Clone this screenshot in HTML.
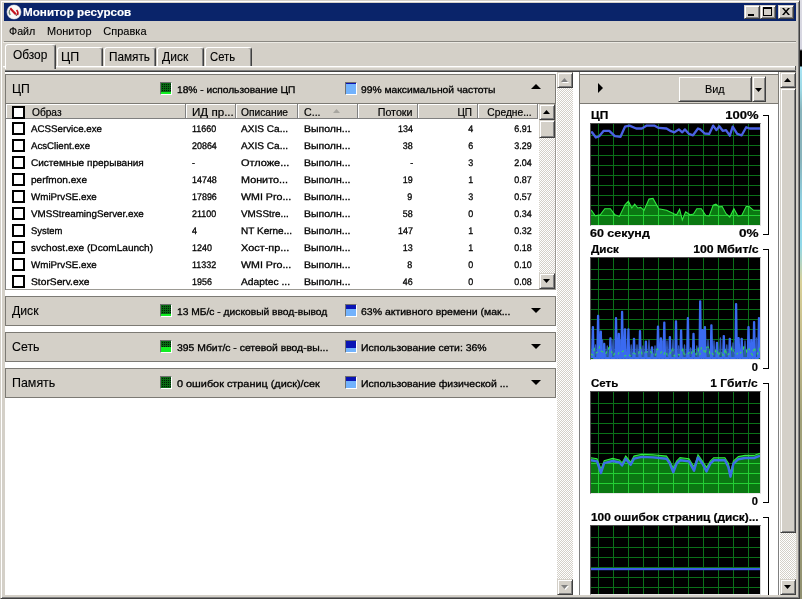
<!DOCTYPE html>
<html><head><meta charset="utf-8"><title>Монитор ресурсов</title>
<style>
html,body{margin:0;padding:0}
body{width:802px;height:599px;overflow:hidden;background:#d4d0c8;position:relative;font-family:"Liberation Sans",sans-serif;font-size:11px;color:#000}
div,span,svg{position:absolute;box-sizing:border-box}
.t{white-space:nowrap;line-height:16px;height:16px;transform-origin:0 0}
.tr{transform-origin:100% 0}
.b{font-weight:bold}
.btn{background:#d4d0c8;border:1px solid;border-color:#d4d0c8 #404040 #404040 #d4d0c8;box-shadow:inset 1px 1px 0 #fff,inset -1px -1px 0 #808080}
.dith{background-image:conic-gradient(#fff 25%,#d4d0c8 0 50%,#fff 0 75%,#d4d0c8 0);background-size:2px 2px}
.sec{left:5px;width:551px;height:30px;background:#d4d0c8;border:1px solid #7c7a74}
.cb{width:13px;height:13px;border:2px solid #000;background:#fff;left:12px}
.hd{top:104px;height:15px;background:#d4d0c8;border-right:1px solid #808080;border-bottom:1px solid #808080;box-shadow:inset 1px 1px 0 #fff}
</style></head><body><div id="w" style="left:0;top:0;width:802px;height:599px;will-change:transform">

<div style="left:800px;top:0;width:2px;height:599px;background:linear-gradient(#dcdce4 0,#d4d4e0 49px,#000 51px,#000 66px,#a8e4f4 67px,#9cd8e4 90px,#88b4bc 110px,#88b4bc 160px,#90d0e0 200px,#90d8e8 245px,#d8d098 282px,#c0b888 350px,#a0a078 420px,#a0a078 480px,#909070 599px)"></div>
<div style="left:0;top:0;width:800px;height:599px;border:1px solid;border-color:#d4d0c8 #404040 #404040 #d4d0c8;box-shadow:inset 1px 1px 0 #fff,inset -1px -1px 0 #808080"></div>
<div style="left:4px;top:3px;width:792px;height:18px;background:#0a246a"></div>
<svg style="left:6px;top:4px" width="16" height="16" viewBox="0 0 16 16"><circle cx="8" cy="8" r="7.5" fill="#f4f2ee" opacity="0.55"/><circle cx="8" cy="8" r="6.9" fill="#fbfaf8"/><path d="M4.2 4.2 L9.8 10.2" stroke="#c4141e" stroke-width="2.2" fill="none"/><path d="M10.6 6 Q12.6 8 11.5 11" stroke="#c4141e" stroke-width="1.7" fill="none"/><path d="M3.6 6 Q2.6 8.4 4.2 11" stroke="#6f8a78" stroke-width="1.3" fill="none"/><path d="M9.6 10.6 L11 11.6" stroke="#5a3a3a" stroke-width="1.2"/></svg>
<span class="t b" style="top:4.0px;font-size:11.5px;-webkit-text-stroke:0.15px;color:#fff;left:23.35px;transform:scaleX(1.0142);">Монитор ресурсов</span>
<div class="btn" style="left:744px;top:5px;width:16px;height:14px"></div>
<div class="btn" style="left:760px;top:5px;width:16px;height:14px"></div>
<div class="btn" style="left:778px;top:5px;width:16px;height:14px"></div>
<div style="left:748px;top:14px;width:6px;height:2px;background:#000"></div>
<div style="left:763px;top:7px;width:9px;height:9px;border:1px solid #000;border-top-width:2px"></div>
<svg style="left:782px;top:8px" width="8" height="7" viewBox="0 0 8 7"><path d="M0 0h2l2 2.5 2-2.5h2L5 3.5 8 7H6L4 4.5 2 7H0l3-3.5z" fill="#000"/></svg>
<span class="t" style="top:23.25px;font-size:11px;-webkit-text-stroke:0.12px;left:9.10px;transform:scaleX(0.9724);">Файл</span>
<span class="t" style="top:23.25px;font-size:11px;-webkit-text-stroke:0.12px;left:47.10px;transform:scaleX(0.9948);">Монитор</span>
<span class="t" style="top:23.25px;font-size:11px;-webkit-text-stroke:0.12px;left:103.35px;">Справка</span>
<div style="left:4px;top:41px;width:792px;height:1px;background:#8a8882"></div>
<div style="left:3px;top:42px;width:793px;height:1px;background:#eceae4"></div>
<div style="left:3px;top:66px;width:792px;height:1px;background:#fff"></div>
<div style="left:3px;top:67px;width:792px;height:1px;background:#e6e3dd"></div>
<div style="left:795px;top:66px;width:1px;height:6px;background:#505050"></div>
<div style="left:57px;top:47px;width:46px;height:19px;background:#d4d0c8;border-left:1px solid #fff;border-top:1px solid #fff;border-right:1px solid #404040;box-shadow:inset -1px 0 0 #808080;border-radius:3px 3px 0 0"></div>
<span class="t" style="top:48.75px;font-size:12.2px;-webkit-text-stroke:0.12px;left:60.90px;transform:scaleX(1.0179);">ЦП</span>
<div style="left:104px;top:47px;width:52px;height:19px;background:#d4d0c8;border-left:1px solid #fff;border-top:1px solid #fff;border-right:1px solid #404040;box-shadow:inset -1px 0 0 #808080;border-radius:3px 3px 0 0"></div>
<span class="t" style="top:48.75px;font-size:12.2px;-webkit-text-stroke:0.12px;left:109.40px;transform:scaleX(0.9658);">Память</span>
<div style="left:157px;top:47px;width:47px;height:19px;background:#d4d0c8;border-left:1px solid #fff;border-top:1px solid #fff;border-right:1px solid #404040;box-shadow:inset -1px 0 0 #808080;border-radius:3px 3px 0 0"></div>
<span class="t" style="top:48.75px;font-size:12.2px;-webkit-text-stroke:0.12px;left:162.00px;transform:scaleX(0.9887);">Диск</span>
<div style="left:205px;top:47px;width:47px;height:19px;background:#d4d0c8;border-left:1px solid #fff;border-top:1px solid #fff;border-right:1px solid #404040;box-shadow:inset -1px 0 0 #808080;border-radius:3px 3px 0 0"></div>
<span class="t" style="top:48.75px;font-size:12.2px;-webkit-text-stroke:0.12px;left:210.10px;transform:scaleX(0.9259);">Сеть</span>
<div style="left:5px;top:44px;width:51px;height:25px;background:#d4d0c8;border-left:1px solid #fff;border-top:1px solid #fff;border-right:1px solid #404040;box-shadow:inset -1px 0 0 #808080;border-radius:3px 3px 0 0"></div>
<span class="t" style="top:46.75px;font-size:12.2px;-webkit-text-stroke:0.12px;left:13.40px;transform:scaleX(0.9743);">Обзор</span>
<div style="left:5px;top:70px;width:791px;height:1px;background:#808080"></div>
<div style="left:5px;top:71px;width:791px;height:1px;background:#404040"></div>
<div style="left:5px;top:72px;width:790px;height:523px;background:#fff"></div>
<div class="dith" style="left:557px;top:72px;width:16px;height:523px"></div>
<div class="btn" style="left:557px;top:72px;width:16px;height:16px"></div>
<div class="btn" style="left:557px;top:579px;width:16px;height:16px"></div>
<svg style="left:561px;top:78px" width="8" height="5"><path d="M1 5L4.5 1 8 5z" fill="#fff"/><path d="M0 4L3.5 0 7 4z" fill="#808080"/></svg>
<svg style="left:561px;top:585px" width="8" height="5"><path d="M1 1L4.5 5 8 1z" fill="#fff"/><path d="M0 0L3.5 4 7 0z" fill="#808080"/></svg>
<div class="sec" style="top:74px"></div>
<span class="t" style="top:81.25px;font-size:12.6px;-webkit-text-stroke:0.12px;left:12.10px;transform:scaleX(0.9687);">ЦП</span>
<div style="left:160px;top:82px;width:12px;height:13px;border:1px solid;border-color:#707070 #fff #fff #707070;background:#0a6a14"></div>
<svg style="left:161px;top:83px" width="10" height="11"><path d="M1 1h1v1h-1zM1 3h1v1h-1zM1 5h1v1h-1zM1 7h1v1h-1zM1 9h1v1h-1zM3 1h1v1h-1zM3 3h1v1h-1zM3 5h1v1h-1zM3 7h1v1h-1zM3 9h1v1h-1zM5 1h1v1h-1zM5 3h1v1h-1zM5 5h1v1h-1zM5 7h1v1h-1zM5 9h1v1h-1zM7 1h1v1h-1zM7 3h1v1h-1zM7 5h1v1h-1zM7 7h1v1h-1zM7 9h1v1h-1zM9 1h1v1h-1zM9 3h1v1h-1zM9 5h1v1h-1zM9 7h1v1h-1zM9 9h1v1h-1z" fill="#001c04"/></svg>
<div style="left:161px;top:92px;width:10px;height:2px;background:#12ee22"></div>
<span class="t" style="top:81.75px;font-size:9.7px;-webkit-text-stroke:0.3px;left:177.10px;transform:scaleX(1.0516) rotate(0.03deg);">18% - использование ЦП</span>
<div style="left:345px;top:82px;width:12px;height:13px;border:1px solid;border-color:#707070 #fff #fff #707070;background:#0a14b4"></div>
<div style="left:346px;top:84px;width:10px;height:10px;background:#72b2fc"></div>
<span class="t" style="top:81.75px;font-size:9.7px;-webkit-text-stroke:0.3px;left:361.00px;transform:scaleX(1.0623) rotate(0.03deg);">99% максимальной частоты</span>
<svg style="left:531px;top:84px" width="10" height="5"><path d="M0 5L5 0 10 5z" fill="#000"/></svg>
<div class="sec" style="top:296px"></div>
<span class="t" style="top:303.25px;font-size:12.6px;-webkit-text-stroke:0.12px;left:12.10px;transform:scaleX(0.9699);">Диск</span>
<div style="left:160px;top:304px;width:12px;height:13px;border:1px solid;border-color:#707070 #fff #fff #707070;background:#0a6a14"></div>
<svg style="left:161px;top:305px" width="10" height="11"><path d="M1 1h1v1h-1zM1 3h1v1h-1zM1 5h1v1h-1zM1 7h1v1h-1zM1 9h1v1h-1zM3 1h1v1h-1zM3 3h1v1h-1zM3 5h1v1h-1zM3 7h1v1h-1zM3 9h1v1h-1zM5 1h1v1h-1zM5 3h1v1h-1zM5 5h1v1h-1zM5 7h1v1h-1zM5 9h1v1h-1zM7 1h1v1h-1zM7 3h1v1h-1zM7 5h1v1h-1zM7 7h1v1h-1zM7 9h1v1h-1zM9 1h1v1h-1zM9 3h1v1h-1zM9 5h1v1h-1zM9 7h1v1h-1zM9 9h1v1h-1z" fill="#001c04"/></svg>
<div style="left:161px;top:314px;width:10px;height:2px;background:#12ee22"></div>
<span class="t" style="top:303.75px;font-size:9.7px;-webkit-text-stroke:0.3px;left:177.10px;transform:scaleX(1.0576) rotate(0.03deg);">13 МБ/с - дисковый ввод-вывод</span>
<div style="left:345px;top:304px;width:12px;height:13px;border:1px solid;border-color:#707070 #fff #fff #707070;background:#0a14b4"></div>
<div style="left:346px;top:309px;width:10px;height:7px;background:#72b2fc"></div>
<span class="t" style="top:303.75px;font-size:9.7px;-webkit-text-stroke:0.3px;left:361.00px;transform:scaleX(1.0829) rotate(0.03deg);">63% активного времени (мак...</span>
<svg style="left:531px;top:308px" width="10" height="5"><path d="M0 0L5 5 10 0z" fill="#000"/></svg>
<div class="sec" style="top:332px"></div>
<span class="t" style="top:339.25px;font-size:12.6px;-webkit-text-stroke:0.12px;left:12.10px;transform:scaleX(0.9834);">Сеть</span>
<div style="left:160px;top:340px;width:12px;height:13px;border:1px solid;border-color:#707070 #fff #fff #707070;background:#0a6a14"></div>
<svg style="left:161px;top:341px" width="10" height="11"><path d="M1 1h1v1h-1zM1 3h1v1h-1zM1 5h1v1h-1zM1 7h1v1h-1zM1 9h1v1h-1zM3 1h1v1h-1zM3 3h1v1h-1zM3 5h1v1h-1zM3 7h1v1h-1zM3 9h1v1h-1zM5 1h1v1h-1zM5 3h1v1h-1zM5 5h1v1h-1zM5 7h1v1h-1zM5 9h1v1h-1zM7 1h1v1h-1zM7 3h1v1h-1zM7 5h1v1h-1zM7 7h1v1h-1zM7 9h1v1h-1zM9 1h1v1h-1zM9 3h1v1h-1zM9 5h1v1h-1zM9 7h1v1h-1zM9 9h1v1h-1z" fill="#001c04"/></svg>
<div style="left:161px;top:347px;width:10px;height:5px;background:#12ee22"></div>
<span class="t" style="top:339.75px;font-size:9.7px;-webkit-text-stroke:0.3px;left:177.10px;transform:scaleX(1.0727) rotate(0.03deg);">395 Мбит/с - сетевой ввод-вы...</span>
<div style="left:345px;top:340px;width:12px;height:13px;border:1px solid;border-color:#707070 #fff #fff #707070;background:#0a14b4"></div>
<div style="left:346px;top:348px;width:10px;height:4px;background:#72b2fc"></div>
<span class="t" style="top:339.75px;font-size:9.7px;-webkit-text-stroke:0.3px;left:361.00px;transform:scaleX(1.0790) rotate(0.03deg);">Использование сети: 36%</span>
<svg style="left:531px;top:344px" width="10" height="5"><path d="M0 0L5 5 10 0z" fill="#000"/></svg>
<div class="sec" style="top:368px"></div>
<span class="t" style="top:375.25px;font-size:12.6px;-webkit-text-stroke:0.12px;left:12.10px;transform:scaleX(0.9869);">Память</span>
<div style="left:160px;top:376px;width:12px;height:13px;border:1px solid;border-color:#707070 #fff #fff #707070;background:#0a6a14"></div>
<svg style="left:161px;top:377px" width="10" height="11"><path d="M1 1h1v1h-1zM1 3h1v1h-1zM1 5h1v1h-1zM1 7h1v1h-1zM1 9h1v1h-1zM3 1h1v1h-1zM3 3h1v1h-1zM3 5h1v1h-1zM3 7h1v1h-1zM3 9h1v1h-1zM5 1h1v1h-1zM5 3h1v1h-1zM5 5h1v1h-1zM5 7h1v1h-1zM5 9h1v1h-1zM7 1h1v1h-1zM7 3h1v1h-1zM7 5h1v1h-1zM7 7h1v1h-1zM7 9h1v1h-1zM9 1h1v1h-1zM9 3h1v1h-1zM9 5h1v1h-1zM9 7h1v1h-1zM9 9h1v1h-1z" fill="#001c04"/></svg>
<span class="t" style="top:375.75px;font-size:9.7px;-webkit-text-stroke:0.3px;left:177.10px;transform:scaleX(1.1214) rotate(0.03deg);">0 ошибок страниц (диск)/сек</span>
<div style="left:345px;top:376px;width:12px;height:13px;border:1px solid;border-color:#707070 #fff #fff #707070;background:#0a14b4"></div>
<div style="left:346px;top:381px;width:10px;height:7px;background:#72b2fc"></div>
<span class="t" style="top:375.75px;font-size:9.7px;-webkit-text-stroke:0.3px;left:361.00px;transform:scaleX(1.0811) rotate(0.03deg);">Использование физической ...</span>
<svg style="left:531px;top:380px" width="10" height="5"><path d="M0 0L5 5 10 0z" fill="#000"/></svg>
<div class="hd" style="left:6px;width:180px"></div>
<div class="hd" style="left:186px;width:50px"></div>
<div class="hd" style="left:236px;width:62px"></div>
<div class="hd" style="left:298px;width:60px"></div>
<div class="hd" style="left:358px;width:60px"></div>
<div class="hd" style="left:418px;width:60px"></div>
<div class="hd" style="left:478px;width:60px"></div>
<div class="cb" style="top:106px"></div>
<span class="t" style="top:104.5px;font-size:10.3px;-webkit-text-stroke:0.2px;left:31.60px;transform:scaleX(0.9860);">Образ</span>
<span class="t" style="top:104.5px;font-size:10.3px;-webkit-text-stroke:0.2px;left:191.60px;transform:scaleX(1.1259);">ИД пр...</span>
<span class="t" style="top:104.5px;font-size:10.3px;-webkit-text-stroke:0.2px;left:241.35px;transform:scaleX(0.9928);">Описание</span>
<span class="t" style="top:104.5px;font-size:10.3px;-webkit-text-stroke:0.2px;left:303.85px;transform:scaleX(1.0324);">С...</span>
<svg style="left:333px;top:109px" width="7" height="4"><path d="M0 4L3.5 0 7 4z" fill="#a8a6a0"/></svg>
<span class="t tr" style="top:104.5px;font-size:10.3px;-webkit-text-stroke:0.2px;right:389.60px;transform:scaleX(1.0388);">Потоки</span>
<span class="t tr" style="top:104.5px;font-size:10.3px;-webkit-text-stroke:0.2px;right:329.60px;transform:scaleX(0.9680);">ЦП</span>
<span class="t tr" style="top:104.5px;font-size:10.3px;-webkit-text-stroke:0.2px;right:269.85px;transform:scaleX(0.9917);">Средне...</span>
<div class="dith" style="left:539px;top:104px;width:16px;height:185px"></div>
<div class="btn" style="left:539px;top:104px;width:16px;height:16px"></div>
<div class="btn" style="left:539px;top:120px;width:16px;height:18px"></div>
<div class="btn" style="left:539px;top:273px;width:16px;height:16px"></div>
<svg style="left:543px;top:110px" width="7" height="4"><path d="M0 4L3.5 0 7 4z" fill="#000"/></svg>
<svg style="left:543px;top:279px" width="7" height="4"><path d="M0 0L3.5 4 7 0z" fill="#000"/></svg>
<div class="cb" style="top:122px"></div>
<span class="t" style="top:120.75px;font-size:9.6px;-webkit-text-stroke:0.3px;left:30.60px;transform:scaleX(1.0163) rotate(0.03deg);">ACSService.exe</span>
<span class="t" style="top:120.75px;font-size:9.6px;-webkit-text-stroke:0.3px;left:191.60px;transform:scaleX(0.9300) rotate(0.03deg);">11660</span>
<span class="t" style="top:120.75px;font-size:9.6px;-webkit-text-stroke:0.3px;left:241.35px;transform:scaleX(1.0503) rotate(0.03deg);">AXIS Ca...</span>
<span class="t" style="top:120.75px;font-size:9.6px;-webkit-text-stroke:0.3px;left:303.85px;transform:scaleX(1.0949) rotate(0.03deg);">Выполн...</span>
<span class="t tr" style="top:120.75px;font-size:9.6px;-webkit-text-stroke:0.3px;right:389.30px;transform:scaleX(0.9300) rotate(0.03deg);">134</span>
<span class="t tr" style="top:120.75px;font-size:9.6px;-webkit-text-stroke:0.3px;right:329.10px;transform:scaleX(0.9300) rotate(0.03deg);">4</span>
<span class="t tr" style="top:120.75px;font-size:9.6px;-webkit-text-stroke:0.3px;right:269.85px;transform:scaleX(0.9300) rotate(0.03deg);">6.91</span>
<div class="cb" style="top:139px"></div>
<span class="t" style="top:137.75px;font-size:9.6px;-webkit-text-stroke:0.3px;left:30.60px;transform:scaleX(1.0059) rotate(0.03deg);">AcsClient.exe</span>
<span class="t" style="top:137.75px;font-size:9.6px;-webkit-text-stroke:0.3px;left:191.60px;transform:scaleX(0.9300) rotate(0.03deg);">20864</span>
<span class="t" style="top:137.75px;font-size:9.6px;-webkit-text-stroke:0.3px;left:241.35px;transform:scaleX(1.0503) rotate(0.03deg);">AXIS Ca...</span>
<span class="t" style="top:137.75px;font-size:9.6px;-webkit-text-stroke:0.3px;left:303.85px;transform:scaleX(1.0949) rotate(0.03deg);">Выполн...</span>
<span class="t tr" style="top:137.75px;font-size:9.6px;-webkit-text-stroke:0.3px;right:389.30px;transform:scaleX(0.9300) rotate(0.03deg);">38</span>
<span class="t tr" style="top:137.75px;font-size:9.6px;-webkit-text-stroke:0.3px;right:329.10px;transform:scaleX(0.9300) rotate(0.03deg);">6</span>
<span class="t tr" style="top:137.75px;font-size:9.6px;-webkit-text-stroke:0.3px;right:269.85px;transform:scaleX(0.9300) rotate(0.03deg);">3.29</span>
<div class="cb" style="top:156px"></div>
<span class="t" style="top:154.75px;font-size:9.6px;-webkit-text-stroke:0.3px;left:30.60px;transform:scaleX(1.0466) rotate(0.03deg);">Системные прерывания</span>
<span class="t" style="top:154.75px;font-size:9.6px;-webkit-text-stroke:0.3px;left:191.60px;transform:scaleX(0.9300) rotate(0.03deg);">-</span>
<span class="t" style="top:154.75px;font-size:9.6px;-webkit-text-stroke:0.3px;left:241.35px;transform:scaleX(1.1407) rotate(0.03deg);">Отложе...</span>
<span class="t" style="top:154.75px;font-size:9.6px;-webkit-text-stroke:0.3px;left:303.85px;transform:scaleX(1.0949) rotate(0.03deg);">Выполн...</span>
<span class="t tr" style="top:154.75px;font-size:9.6px;-webkit-text-stroke:0.3px;right:389.30px;transform:scaleX(0.9300) rotate(0.03deg);">-</span>
<span class="t tr" style="top:154.75px;font-size:9.6px;-webkit-text-stroke:0.3px;right:329.10px;transform:scaleX(0.9300) rotate(0.03deg);">3</span>
<span class="t tr" style="top:154.75px;font-size:9.6px;-webkit-text-stroke:0.3px;right:269.85px;transform:scaleX(0.9300) rotate(0.03deg);">2.04</span>
<div class="cb" style="top:173px"></div>
<span class="t" style="top:171.75px;font-size:9.6px;-webkit-text-stroke:0.3px;left:30.60px;transform:scaleX(1.0501) rotate(0.03deg);">perfmon.exe</span>
<span class="t" style="top:171.75px;font-size:9.6px;-webkit-text-stroke:0.3px;left:191.60px;transform:scaleX(0.9300) rotate(0.03deg);">14748</span>
<span class="t" style="top:171.75px;font-size:9.6px;-webkit-text-stroke:0.3px;left:241.35px;transform:scaleX(1.1278) rotate(0.03deg);">Монито...</span>
<span class="t" style="top:171.75px;font-size:9.6px;-webkit-text-stroke:0.3px;left:303.85px;transform:scaleX(1.0949) rotate(0.03deg);">Выполн...</span>
<span class="t tr" style="top:171.75px;font-size:9.6px;-webkit-text-stroke:0.3px;right:389.30px;transform:scaleX(0.9300) rotate(0.03deg);">19</span>
<span class="t tr" style="top:171.75px;font-size:9.6px;-webkit-text-stroke:0.3px;right:329.10px;transform:scaleX(0.9300) rotate(0.03deg);">1</span>
<span class="t tr" style="top:171.75px;font-size:9.6px;-webkit-text-stroke:0.3px;right:269.85px;transform:scaleX(0.9300) rotate(0.03deg);">0.87</span>
<div class="cb" style="top:190px"></div>
<span class="t" style="top:188.75px;font-size:9.6px;-webkit-text-stroke:0.3px;left:30.60px;transform:scaleX(1.0199) rotate(0.03deg);">WmiPrvSE.exe</span>
<span class="t" style="top:188.75px;font-size:9.6px;-webkit-text-stroke:0.3px;left:191.60px;transform:scaleX(0.9300) rotate(0.03deg);">17896</span>
<span class="t" style="top:188.75px;font-size:9.6px;-webkit-text-stroke:0.3px;left:241.35px;transform:scaleX(1.1101) rotate(0.03deg);">WMI Pro...</span>
<span class="t" style="top:188.75px;font-size:9.6px;-webkit-text-stroke:0.3px;left:303.85px;transform:scaleX(1.0949) rotate(0.03deg);">Выполн...</span>
<span class="t tr" style="top:188.75px;font-size:9.6px;-webkit-text-stroke:0.3px;right:389.30px;transform:scaleX(0.9300) rotate(0.03deg);">9</span>
<span class="t tr" style="top:188.75px;font-size:9.6px;-webkit-text-stroke:0.3px;right:329.10px;transform:scaleX(0.9300) rotate(0.03deg);">3</span>
<span class="t tr" style="top:188.75px;font-size:9.6px;-webkit-text-stroke:0.3px;right:269.85px;transform:scaleX(0.9300) rotate(0.03deg);">0.57</span>
<div class="cb" style="top:207px"></div>
<span class="t" style="top:205.75px;font-size:9.6px;-webkit-text-stroke:0.3px;left:30.60px;transform:scaleX(1.0220) rotate(0.03deg);">VMSStreamingServer.exe</span>
<span class="t" style="top:205.75px;font-size:9.6px;-webkit-text-stroke:0.3px;left:191.60px;transform:scaleX(0.9300) rotate(0.03deg);">21100</span>
<span class="t" style="top:205.75px;font-size:9.6px;-webkit-text-stroke:0.3px;left:241.35px;transform:scaleX(1.0304) rotate(0.03deg);">VMSStre...</span>
<span class="t" style="top:205.75px;font-size:9.6px;-webkit-text-stroke:0.3px;left:303.85px;transform:scaleX(1.0949) rotate(0.03deg);">Выполн...</span>
<span class="t tr" style="top:205.75px;font-size:9.6px;-webkit-text-stroke:0.3px;right:389.30px;transform:scaleX(0.9300) rotate(0.03deg);">58</span>
<span class="t tr" style="top:205.75px;font-size:9.6px;-webkit-text-stroke:0.3px;right:329.10px;transform:scaleX(0.9300) rotate(0.03deg);">0</span>
<span class="t tr" style="top:205.75px;font-size:9.6px;-webkit-text-stroke:0.3px;right:269.85px;transform:scaleX(0.9300) rotate(0.03deg);">0.34</span>
<div class="cb" style="top:224px"></div>
<span class="t" style="top:222.75px;font-size:9.6px;-webkit-text-stroke:0.3px;left:30.60px;transform:scaleX(0.9844) rotate(0.03deg);">System</span>
<span class="t" style="top:222.75px;font-size:9.6px;-webkit-text-stroke:0.3px;left:191.60px;transform:scaleX(0.9300) rotate(0.03deg);">4</span>
<span class="t" style="top:222.75px;font-size:9.6px;-webkit-text-stroke:0.3px;left:241.35px;transform:scaleX(1.0442) rotate(0.03deg);">NT Kerne...</span>
<span class="t" style="top:222.75px;font-size:9.6px;-webkit-text-stroke:0.3px;left:303.85px;transform:scaleX(1.0949) rotate(0.03deg);">Выполн...</span>
<span class="t tr" style="top:222.75px;font-size:9.6px;-webkit-text-stroke:0.3px;right:389.30px;transform:scaleX(0.9300) rotate(0.03deg);">147</span>
<span class="t tr" style="top:222.75px;font-size:9.6px;-webkit-text-stroke:0.3px;right:329.10px;transform:scaleX(0.9300) rotate(0.03deg);">1</span>
<span class="t tr" style="top:222.75px;font-size:9.6px;-webkit-text-stroke:0.3px;right:269.85px;transform:scaleX(0.9300) rotate(0.03deg);">0.32</span>
<div class="cb" style="top:241px"></div>
<span class="t" style="top:239.75px;font-size:9.6px;-webkit-text-stroke:0.3px;left:30.60px;transform:scaleX(1.0503) rotate(0.03deg);">svchost.exe (DcomLaunch)</span>
<span class="t" style="top:239.75px;font-size:9.6px;-webkit-text-stroke:0.3px;left:191.60px;transform:scaleX(0.9300) rotate(0.03deg);">1240</span>
<span class="t" style="top:239.75px;font-size:9.6px;-webkit-text-stroke:0.3px;left:241.35px;transform:scaleX(1.1352) rotate(0.03deg);">Хост-пр...</span>
<span class="t" style="top:239.75px;font-size:9.6px;-webkit-text-stroke:0.3px;left:303.85px;transform:scaleX(1.0949) rotate(0.03deg);">Выполн...</span>
<span class="t tr" style="top:239.75px;font-size:9.6px;-webkit-text-stroke:0.3px;right:389.30px;transform:scaleX(0.9300) rotate(0.03deg);">13</span>
<span class="t tr" style="top:239.75px;font-size:9.6px;-webkit-text-stroke:0.3px;right:329.10px;transform:scaleX(0.9300) rotate(0.03deg);">1</span>
<span class="t tr" style="top:239.75px;font-size:9.6px;-webkit-text-stroke:0.3px;right:269.85px;transform:scaleX(0.9300) rotate(0.03deg);">0.18</span>
<div class="cb" style="top:258px"></div>
<span class="t" style="top:256.75px;font-size:9.6px;-webkit-text-stroke:0.3px;left:30.60px;transform:scaleX(1.0199) rotate(0.03deg);">WmiPrvSE.exe</span>
<span class="t" style="top:256.75px;font-size:9.6px;-webkit-text-stroke:0.3px;left:191.60px;transform:scaleX(0.9300) rotate(0.03deg);">11332</span>
<span class="t" style="top:256.75px;font-size:9.6px;-webkit-text-stroke:0.3px;left:241.35px;transform:scaleX(1.1101) rotate(0.03deg);">WMI Pro...</span>
<span class="t" style="top:256.75px;font-size:9.6px;-webkit-text-stroke:0.3px;left:303.85px;transform:scaleX(1.0949) rotate(0.03deg);">Выполн...</span>
<span class="t tr" style="top:256.75px;font-size:9.6px;-webkit-text-stroke:0.3px;right:389.30px;transform:scaleX(0.9300) rotate(0.03deg);">8</span>
<span class="t tr" style="top:256.75px;font-size:9.6px;-webkit-text-stroke:0.3px;right:329.10px;transform:scaleX(0.9300) rotate(0.03deg);">0</span>
<span class="t tr" style="top:256.75px;font-size:9.6px;-webkit-text-stroke:0.3px;right:269.85px;transform:scaleX(0.9300) rotate(0.03deg);">0.10</span>
<div class="cb" style="top:275px"></div>
<span class="t" style="top:273.75px;font-size:9.6px;-webkit-text-stroke:0.3px;left:30.60px;transform:scaleX(1.0685) rotate(0.03deg);">StorServ.exe</span>
<span class="t" style="top:273.75px;font-size:9.6px;-webkit-text-stroke:0.3px;left:191.60px;transform:scaleX(0.9300) rotate(0.03deg);">1956</span>
<span class="t" style="top:273.75px;font-size:9.6px;-webkit-text-stroke:0.3px;left:241.35px;transform:scaleX(1.0692) rotate(0.03deg);">Adaptec ...</span>
<span class="t" style="top:273.75px;font-size:9.6px;-webkit-text-stroke:0.3px;left:303.85px;transform:scaleX(1.0949) rotate(0.03deg);">Выполн...</span>
<span class="t tr" style="top:273.75px;font-size:9.6px;-webkit-text-stroke:0.3px;right:389.30px;transform:scaleX(0.9300) rotate(0.03deg);">46</span>
<span class="t tr" style="top:273.75px;font-size:9.6px;-webkit-text-stroke:0.3px;right:329.10px;transform:scaleX(0.9300) rotate(0.03deg);">0</span>
<span class="t tr" style="top:273.75px;font-size:9.6px;-webkit-text-stroke:0.3px;right:269.85px;transform:scaleX(0.9300) rotate(0.03deg);">0.08</span>
<div style="left:5px;top:289px;width:551px;height:1px;background:#9c9a94"></div>
<div style="left:5px;top:104px;width:1px;height:186px;background:#808080"></div>
<div style="left:555px;top:104px;width:1px;height:186px;background:#9c9a94"></div>
<div style="left:579px;top:72px;width:1px;height:523px;background:#808080"></div>
<div style="left:778px;top:72px;width:1px;height:523px;background:#808080"></div>
<div style="left:579px;top:74px;width:200px;height:30px;background:#d4d0c8;border:1px solid #7c7a74"></div>
<svg style="left:598px;top:83px" width="5" height="10"><path d="M0 0L5 5 0 10z" fill="#000"/></svg>
<div class="btn" style="left:678px;top:76px;width:74px;height:26px"></div>
<div class="btn" style="left:752px;top:76px;width:14px;height:26px"></div>
<span class="t" style="top:81.0px;font-size:11.6px;-webkit-text-stroke:0.12px;left:705.40px;transform:scaleX(0.9388);">Вид</span>
<svg style="left:755px;top:88px" width="7" height="4"><path d="M0 0L3.5 4 7 0z" fill="#000"/></svg>
<div class="dith" style="left:780px;top:72px;width:16px;height:523px"></div>
<div class="btn" style="left:780px;top:72px;width:16px;height:16px"></div>
<div class="btn" style="left:780px;top:88px;width:16px;height:445px"></div>
<div class="btn" style="left:780px;top:579px;width:16px;height:16px"></div>
<svg style="left:784px;top:78px" width="7" height="4"><path d="M0 4L3.5 0 7 4z" fill="#000"/></svg>
<svg style="left:784px;top:585px" width="7" height="4"><path d="M0 0L3.5 4 7 0z" fill="#000"/></svg>
<span class="t b" style="top:106.75px;font-size:10.8px;-webkit-text-stroke:0.2px;left:590.60px;transform:scaleX(1.1050);">ЦП</span>
<span class="t b tr" style="top:106.75px;font-size:10.8px;-webkit-text-stroke:0.2px;right:43.80px;transform:scaleX(1.2054);">100%</span>
<div style="left:763px;top:115px;width:6px;height:1px;background:#000"></div>
<div style="left:768px;top:115px;width:1px;height:120px;background:#000"></div>
<div style="left:763px;top:234px;width:6px;height:1px;background:#000"></div>
<div style="left:590px;top:123px;width:171px;height:103px;background:#000;border:1px solid;border-color:#4c4c4c #d8d8d8 #e8e8e8 #585858;overflow:hidden"><svg style="left:0;top:0" width="169" height="101" viewBox="0 0 169 101"><path d="M7.5 0V101M22.5 0V101M37.5 0V101M52.5 0V101M67.5 0V101M82.5 0V101M97.5 0V101M112.5 0V101M127.5 0V101M142.5 0V101M157.5 0V101M0 11.5H169M0 21.5H169M0 31.5H169M0 41.5H169M0 51.5H169M0 61.5H169M0 71.5H169M0 81.5H169M0 91.5H169" stroke="#0b7019" stroke-width="1" fill="none"/><clipPath id="c1"><polygon points="0.0,102.0 0.0,86.0 1.0,87.0 4.2,91.9 9.3,90.8 13.8,84.7 19.4,84.7 23.9,90.8 28.4,92.4 34.0,80.7 37.4,77.3 40.8,84.0 43.7,80.2 46.8,84.0 49.7,83.4 53.1,86.3 58.0,75.1 62.0,74.4 67.7,84.7 75.5,86.3 83.4,90.1 85.6,90.8 88.6,85.2 91.3,95.9 94.6,87.9 99.1,90.8 102.5,90.1 105.8,84.7 110.3,84.7 114.8,91.5 118.2,91.9 122.2,81.1 124.9,80.2 128.3,82.9 131.2,82.5 135.0,89.7 138.8,93.0 142.9,84.7 146.9,91.9 150.7,91.5 155.2,82.5 158.1,82.5 162.6,86.3 169.0,86.3 169.0,102.0"/></clipPath><polygon points="0.0,102.0 0.0,86.0 1.0,87.0 4.2,91.9 9.3,90.8 13.8,84.7 19.4,84.7 23.9,90.8 28.4,92.4 34.0,80.7 37.4,77.3 40.8,84.0 43.7,80.2 46.8,84.0 49.7,83.4 53.1,86.3 58.0,75.1 62.0,74.4 67.7,84.7 75.5,86.3 83.4,90.1 85.6,90.8 88.6,85.2 91.3,95.9 94.6,87.9 99.1,90.8 102.5,90.1 105.8,84.7 110.3,84.7 114.8,91.5 118.2,91.9 122.2,81.1 124.9,80.2 128.3,82.9 131.2,82.5 135.0,89.7 138.8,93.0 142.9,84.7 146.9,91.9 150.7,91.5 155.2,82.5 158.1,82.5 162.6,86.3 169.0,86.3 169.0,102.0" fill="#0b7812"/><path d="M7.5 0V101M22.5 0V101M37.5 0V101M52.5 0V101M67.5 0V101M82.5 0V101M97.5 0V101M112.5 0V101M127.5 0V101M142.5 0V101M157.5 0V101M0 11.5H169M0 21.5H169M0 31.5H169M0 41.5H169M0 51.5H169M0 61.5H169M0 71.5H169M0 81.5H169M0 91.5H169" stroke="#24d034" stroke-width="1" fill="none" clip-path="url(#c1)"/><polyline points="0.0,86.0 1.0,87.0 4.2,91.9 9.3,90.8 13.8,84.7 19.4,84.7 23.9,90.8 28.4,92.4 34.0,80.7 37.4,77.3 40.8,84.0 43.7,80.2 46.8,84.0 49.7,83.4 53.1,86.3 58.0,75.1 62.0,74.4 67.7,84.7 75.5,86.3 83.4,90.1 85.6,90.8 88.6,85.2 91.3,95.9 94.6,87.9 99.1,90.8 102.5,90.1 105.8,84.7 110.3,84.7 114.8,91.5 118.2,91.9 122.2,81.1 124.9,80.2 128.3,82.9 131.2,82.5 135.0,89.7 138.8,93.0 142.9,84.7 146.9,91.9 150.7,91.5 155.2,82.5 158.1,82.5 162.6,86.3 169.0,86.3" fill="none" stroke="#30e840" stroke-width="1.1"/><polyline points="0.0,9.0 1.0,8.3 4.9,13.5 8.2,12.2 12.7,6.8 18.3,6.8 23.9,12.2 29.5,12.8 34.0,2.7 38.5,1.6 45.2,4.5 50.9,4.5 55.8,1.6 63.2,1.6 67.7,3.9 75.5,4.5 80.0,7.2 83.4,8.3 87.9,5.4 91.3,8.3 94.0,5.4 98.0,9.9 102.0,11.3 107.0,4.5 109.2,5.4 113.7,9.5 118.2,9.9 122.2,1.6 125.4,6.1 128.3,2.3 131.7,6.8 135.0,6.1 138.8,11.7 141.7,2.7 146.2,9.9 150.7,11.3 155.2,3.2 158.6,4.5 169.0,4.5" fill="none" stroke="#4a62e4" stroke-width="2.3" stroke-linejoin="round"/></svg></div>
<span class="t b" style="top:225.25px;font-size:10.8px;-webkit-text-stroke:0.2px;left:590.20px;transform:scaleX(1.1542);">60 секунд</span>
<span class="t b tr" style="top:225.25px;font-size:10.8px;-webkit-text-stroke:0.2px;right:43.80px;transform:scaleX(1.2557);">0%</span>
<span class="t b" style="top:240.75px;font-size:10.8px;-webkit-text-stroke:0.2px;left:590.60px;transform:scaleX(1.0796);">Диск</span>
<span class="t b tr" style="top:240.75px;font-size:10.8px;-webkit-text-stroke:0.2px;right:43.80px;transform:scaleX(1.1352);">100 Мбит/с</span>
<div style="left:763px;top:249px;width:6px;height:1px;background:#000"></div>
<div style="left:768px;top:249px;width:1px;height:120px;background:#000"></div>
<div style="left:763px;top:368px;width:6px;height:1px;background:#000"></div>
<div style="left:590px;top:257px;width:171px;height:103px;background:#000;border:1px solid;border-color:#4c4c4c #d8d8d8 #e8e8e8 #585858;overflow:hidden"><svg style="left:0;top:0" width="169" height="101" viewBox="0 0 169 101"><path d="M7.5 0V101M22.5 0V101M37.5 0V101M52.5 0V101M67.5 0V101M82.5 0V101M97.5 0V101M112.5 0V101M127.5 0V101M142.5 0V101M157.5 0V101M0 11.5H169M0 21.5H169M0 31.5H169M0 41.5H169M0 51.5H169M0 61.5H169M0 71.5H169M0 81.5H169M0 91.5H169" stroke="#0b7019" stroke-width="1" fill="none"/><clipPath id="c2"><polygon points="0.0,102.0 0.0,96.0 1.7,97.0 3.4,91.0 5.1,95.0 6.8,94.0 8.5,89.0 10.2,93.0 11.9,94.0 13.6,96.0 15.3,95.0 17.0,91.0 18.7,89.0 20.4,93.0 22.1,98.0 23.8,95.0 25.5,95.0 27.2,96.0 28.9,93.0 30.6,94.0 32.3,93.0 34.0,98.0 35.7,97.0 37.4,96.0 39.1,98.0 40.8,96.0 42.5,95.0 44.2,96.0 45.9,96.0 47.6,96.0 49.3,89.0 51.0,96.0 52.7,96.0 54.4,94.0 56.1,94.0 57.8,93.0 59.5,93.0 61.2,96.0 62.9,96.0 64.6,97.0 66.3,91.0 68.0,93.0 69.7,95.0 71.4,93.0 73.1,96.0 74.8,93.0 76.5,98.0 78.2,97.0 79.9,94.0 81.6,91.0 83.3,98.0 85.0,96.0 86.7,96.0 88.4,97.0 90.1,95.0 91.8,91.0 93.5,97.0 95.2,96.0 96.9,96.0 98.6,94.0 100.3,96.0 102.0,91.0 103.7,95.0 105.4,97.0 107.1,91.0 108.8,97.0 110.5,89.0 112.2,91.0 113.9,96.0 115.6,89.0 117.3,89.0 119.0,96.0 120.7,94.0 122.4,97.0 124.1,94.0 125.8,91.0 127.5,98.0 129.2,94.0 130.9,95.0 132.6,98.0 134.3,91.0 136.0,98.0 137.7,96.0 139.4,94.0 141.1,89.0 142.8,94.0 144.5,96.0 146.2,96.0 147.9,93.0 149.6,95.0 151.3,93.0 153.0,89.0 154.7,91.0 156.4,95.0 158.1,91.0 159.8,95.0 161.5,97.0 163.2,89.0 164.9,95.0 166.6,96.0 168.3,91.0 170.0,97.0 170.0,102.0"/></clipPath><polygon points="0.0,102.0 0.0,96.0 1.7,97.0 3.4,91.0 5.1,95.0 6.8,94.0 8.5,89.0 10.2,93.0 11.9,94.0 13.6,96.0 15.3,95.0 17.0,91.0 18.7,89.0 20.4,93.0 22.1,98.0 23.8,95.0 25.5,95.0 27.2,96.0 28.9,93.0 30.6,94.0 32.3,93.0 34.0,98.0 35.7,97.0 37.4,96.0 39.1,98.0 40.8,96.0 42.5,95.0 44.2,96.0 45.9,96.0 47.6,96.0 49.3,89.0 51.0,96.0 52.7,96.0 54.4,94.0 56.1,94.0 57.8,93.0 59.5,93.0 61.2,96.0 62.9,96.0 64.6,97.0 66.3,91.0 68.0,93.0 69.7,95.0 71.4,93.0 73.1,96.0 74.8,93.0 76.5,98.0 78.2,97.0 79.9,94.0 81.6,91.0 83.3,98.0 85.0,96.0 86.7,96.0 88.4,97.0 90.1,95.0 91.8,91.0 93.5,97.0 95.2,96.0 96.9,96.0 98.6,94.0 100.3,96.0 102.0,91.0 103.7,95.0 105.4,97.0 107.1,91.0 108.8,97.0 110.5,89.0 112.2,91.0 113.9,96.0 115.6,89.0 117.3,89.0 119.0,96.0 120.7,94.0 122.4,97.0 124.1,94.0 125.8,91.0 127.5,98.0 129.2,94.0 130.9,95.0 132.6,98.0 134.3,91.0 136.0,98.0 137.7,96.0 139.4,94.0 141.1,89.0 142.8,94.0 144.5,96.0 146.2,96.0 147.9,93.0 149.6,95.0 151.3,93.0 153.0,89.0 154.7,91.0 156.4,95.0 158.1,91.0 159.8,95.0 161.5,97.0 163.2,89.0 164.9,95.0 166.6,96.0 168.3,91.0 170.0,97.0 170.0,102.0" fill="#0b7812"/><path d="M7.5 0V101M22.5 0V101M37.5 0V101M52.5 0V101M67.5 0V101M82.5 0V101M97.5 0V101M112.5 0V101M127.5 0V101M142.5 0V101M157.5 0V101M0 11.5H169M0 21.5H169M0 31.5H169M0 41.5H169M0 51.5H169M0 61.5H169M0 71.5H169M0 81.5H169M0 91.5H169" stroke="#24d034" stroke-width="1" fill="none" clip-path="url(#c2)"/><polyline points="0.0,96.0 1.7,97.0 3.4,91.0 5.1,95.0 6.8,94.0 8.5,89.0 10.2,93.0 11.9,94.0 13.6,96.0 15.3,95.0 17.0,91.0 18.7,89.0 20.4,93.0 22.1,98.0 23.8,95.0 25.5,95.0 27.2,96.0 28.9,93.0 30.6,94.0 32.3,93.0 34.0,98.0 35.7,97.0 37.4,96.0 39.1,98.0 40.8,96.0 42.5,95.0 44.2,96.0 45.9,96.0 47.6,96.0 49.3,89.0 51.0,96.0 52.7,96.0 54.4,94.0 56.1,94.0 57.8,93.0 59.5,93.0 61.2,96.0 62.9,96.0 64.6,97.0 66.3,91.0 68.0,93.0 69.7,95.0 71.4,93.0 73.1,96.0 74.8,93.0 76.5,98.0 78.2,97.0 79.9,94.0 81.6,91.0 83.3,98.0 85.0,96.0 86.7,96.0 88.4,97.0 90.1,95.0 91.8,91.0 93.5,97.0 95.2,96.0 96.9,96.0 98.6,94.0 100.3,96.0 102.0,91.0 103.7,95.0 105.4,97.0 107.1,91.0 108.8,97.0 110.5,89.0 112.2,91.0 113.9,96.0 115.6,89.0 117.3,89.0 119.0,96.0 120.7,94.0 122.4,97.0 124.1,94.0 125.8,91.0 127.5,98.0 129.2,94.0 130.9,95.0 132.6,98.0 134.3,91.0 136.0,98.0 137.7,96.0 139.4,94.0 141.1,89.0 142.8,94.0 144.5,96.0 146.2,96.0 147.9,93.0 149.6,95.0 151.3,93.0 153.0,89.0 154.7,91.0 156.4,95.0 158.1,91.0 159.8,95.0 161.5,97.0 163.2,89.0 164.9,95.0 166.6,96.0 168.3,91.0 170.0,97.0" fill="none" stroke="#30e840" stroke-width="1.1"/><polyline points="3.6,100.0 4.5,87.0 5.4,100.0 10.6,100.0 11.5,82.0 12.4,100.0 15.4,100.0 16.3,88.0 17.2,100.0 21.1,100.0 22.0,82.0 22.9,100.0 28.5,100.0 29.4,82.0 30.3,100.0 39.3,100.0 40.2,87.0 41.1,100.0 45.1,100.0 46.0,87.0 46.9,100.0 51.1,100.0 52.0,88.0 52.9,100.0 57.1,100.0 58.0,82.0 58.9,100.0 63.1,100.0 64.0,88.0 64.9,100.0 70.7,100.0 71.6,83.0 72.5,100.0 75.1,100.0 76.0,83.0 76.9,100.0 81.1,100.0 82.0,82.0 82.9,100.0 86.7,100.0 87.6,88.0 88.5,100.0 92.6,100.0 93.5,87.0 94.4,100.0 98.8,100.0 99.7,90.0 100.6,100.0 104.9,100.0 105.8,88.0 106.7,100.0 116.1,100.0 117.0,82.0 117.9,100.0 122.1,100.0 123.0,83.0 123.9,100.0 128.5,100.0 129.4,80.0 130.3,100.0 134.9,100.0 135.8,87.0 136.7,100.0 141.1,100.0 142.0,85.0 142.9,100.0 153.1,100.0 154.0,83.0 154.9,100.0 164.7,100.0 165.6,80.0 166.5,100.0" fill="none" stroke="#3158b4" stroke-width="1.3" stroke-linejoin="round"/><polyline points="1.0,100.0 1.7,68.9 2.1,68.9 2.8,100.0 6.2,100.0 6.9,57.7 7.3,57.7 8.0,100.0 8.9,100.0 9.6,73.4 10.0,73.4 10.7,100.0 12.3,100.0 13.0,85.8 13.4,85.8 14.1,100.0 18.5,100.0 19.2,80.1 19.6,80.1 20.3,100.0 24.1,100.0 24.8,60.0 25.2,60.0 25.9,100.0 26.9,100.0 27.6,75.7 28.0,75.7 28.7,100.0 30.2,100.0 30.9,53.7 31.3,53.7 32.0,100.0 33.1,100.0 33.8,71.2 34.2,71.2 34.9,100.0 36.5,100.0 37.2,71.2 37.6,71.2 38.3,100.0 42.1,100.0 42.8,80.6 43.2,80.6 43.9,100.0 48.1,100.0 48.8,73.0 49.2,73.0 49.9,100.0 54.0,100.0 54.7,83.5 55.1,83.5 55.8,100.0 60.1,100.0 60.8,89.1 61.2,89.1 61.9,100.0 66.1,100.0 66.8,68.5 67.2,68.5 67.9,100.0 69.0,100.0 69.7,80.1 70.1,80.1 70.8,100.0 72.4,100.0 73.1,64.4 73.5,64.4 74.2,100.0 78.0,100.0 78.7,79.0 79.1,79.0 79.8,100.0 84.1,100.0 84.8,63.3 85.2,63.3 85.9,100.0 89.2,100.0 89.9,72.3 90.3,72.3 91.0,100.0 96.0,100.0 96.7,60.0 97.1,60.0 97.8,100.0 101.6,100.0 102.3,75.7 102.7,75.7 103.4,100.0 108.3,100.0 109.0,43.1 109.4,43.1 110.1,100.0 110.7,100.0 111.4,72.0 111.8,72.0 112.5,100.0 113.0,100.0 113.7,68.9 114.1,68.9 114.8,100.0 119.5,100.0 120.2,67.1 120.6,67.1 121.3,100.0 125.1,100.0 125.8,84.6 126.2,84.6 126.9,100.0 131.9,100.0 132.6,77.9 133.0,77.9 133.7,100.0 137.9,100.0 138.6,80.6 139.0,80.6 139.7,100.0 144.2,100.0 144.9,46.0 145.3,46.0 146.0,100.0 146.7,100.0 147.4,80.0 147.8,80.0 148.5,100.0 149.8,100.0 150.5,80.6 150.9,80.6 151.6,100.0 156.6,100.0 157.3,68.9 157.7,68.9 158.4,100.0 159.4,100.0 160.1,82.0 160.5,82.0 161.2,100.0 162.2,100.0 162.9,64.0 163.3,64.0 164.0,100.0 167.1,100.0 167.8,60.0 168.2,60.0 168.9,100.0" fill="none" stroke="#3a6af0" stroke-width="1.9" stroke-linejoin="round"/><polyline points="0.0,96.0 1.7,97.0 3.4,91.0 5.1,95.0 6.8,94.0 8.5,89.0 10.2,93.0 11.9,94.0 13.6,96.0 15.3,95.0 17.0,91.0 18.7,89.0 20.4,93.0 22.1,98.0 23.8,95.0 25.5,95.0 27.2,96.0 28.9,93.0 30.6,94.0 32.3,93.0 34.0,98.0 35.7,97.0 37.4,96.0 39.1,98.0 40.8,96.0 42.5,95.0 44.2,96.0 45.9,96.0 47.6,96.0 49.3,89.0 51.0,96.0 52.7,96.0 54.4,94.0 56.1,94.0 57.8,93.0 59.5,93.0 61.2,96.0 62.9,96.0 64.6,97.0 66.3,91.0 68.0,93.0 69.7,95.0 71.4,93.0 73.1,96.0 74.8,93.0 76.5,98.0 78.2,97.0 79.9,94.0 81.6,91.0 83.3,98.0 85.0,96.0 86.7,96.0 88.4,97.0 90.1,95.0 91.8,91.0 93.5,97.0 95.2,96.0 96.9,96.0 98.6,94.0 100.3,96.0 102.0,91.0 103.7,95.0 105.4,97.0 107.1,91.0 108.8,97.0 110.5,89.0 112.2,91.0 113.9,96.0 115.6,89.0 117.3,89.0 119.0,96.0 120.7,94.0 122.4,97.0 124.1,94.0 125.8,91.0 127.5,98.0 129.2,94.0 130.9,95.0 132.6,98.0 134.3,91.0 136.0,98.0 137.7,96.0 139.4,94.0 141.1,89.0 142.8,94.0 144.5,96.0 146.2,96.0 147.9,93.0 149.6,95.0 151.3,93.0 153.0,89.0 154.7,91.0 156.4,95.0 158.1,91.0 159.8,95.0 161.5,97.0 163.2,89.0 164.9,95.0 166.6,96.0 168.3,91.0 170.0,97.0" fill="none" stroke="#30e840" stroke-width="1.2" stroke-dasharray="2.5 3.5" opacity="0.75"/></svg></div>
<span class="t b tr" style="top:359.25px;font-size:10.8px;-webkit-text-stroke:0.2px;right:43.80px;transform:scaleX(1.0306);">0</span>
<span class="t b" style="top:374.75px;font-size:10.8px;-webkit-text-stroke:0.2px;left:590.60px;transform:scaleX(1.0667);">Сеть</span>
<span class="t b tr" style="top:374.75px;font-size:10.8px;-webkit-text-stroke:0.2px;right:43.80px;transform:scaleX(1.1092);">1 Гбит/с</span>
<div style="left:763px;top:383px;width:6px;height:1px;background:#000"></div>
<div style="left:768px;top:383px;width:1px;height:120px;background:#000"></div>
<div style="left:763px;top:502px;width:6px;height:1px;background:#000"></div>
<div style="left:590px;top:391px;width:171px;height:103px;background:#000;border:1px solid;border-color:#4c4c4c #d8d8d8 #e8e8e8 #585858;overflow:hidden"><svg style="left:0;top:0" width="169" height="101" viewBox="0 0 169 101"><path d="M7.5 0V101M22.5 0V101M37.5 0V101M52.5 0V101M67.5 0V101M82.5 0V101M97.5 0V101M112.5 0V101M127.5 0V101M142.5 0V101M157.5 0V101M0 11.5H169M0 21.5H169M0 31.5H169M0 41.5H169M0 51.5H169M0 61.5H169M0 71.5H169M0 81.5H169M0 91.5H169" stroke="#0b7019" stroke-width="1" fill="none"/><clipPath id="c3"><polygon points="0.0,102.0 0.0,65.7 6.0,66.8 10.0,76.9 13.2,68.6 21.7,66.4 28.4,67.9 31.1,70.9 34.7,64.1 39.6,70.2 43.0,64.1 50.9,62.3 62.0,62.8 75.5,64.1 78.9,69.1 82.3,76.1 85.6,69.1 89.0,65.7 98.0,66.8 103.0,74.7 105.0,69.1 107.0,62.8 111.5,69.1 115.5,75.4 119.3,69.1 122.7,65.7 133.9,65.7 137.3,70.9 139.5,80.6 142.4,69.1 147.4,64.6 154.0,63.4 163.0,63.4 169.0,61.2 169.0,102.0"/></clipPath><polygon points="0.0,102.0 0.0,65.7 6.0,66.8 10.0,76.9 13.2,68.6 21.7,66.4 28.4,67.9 31.1,70.9 34.7,64.1 39.6,70.2 43.0,64.1 50.9,62.3 62.0,62.8 75.5,64.1 78.9,69.1 82.3,76.1 85.6,69.1 89.0,65.7 98.0,66.8 103.0,74.7 105.0,69.1 107.0,62.8 111.5,69.1 115.5,75.4 119.3,69.1 122.7,65.7 133.9,65.7 137.3,70.9 139.5,80.6 142.4,69.1 147.4,64.6 154.0,63.4 163.0,63.4 169.0,61.2 169.0,102.0" fill="#0b7812"/><path d="M7.5 0V101M22.5 0V101M37.5 0V101M52.5 0V101M67.5 0V101M82.5 0V101M97.5 0V101M112.5 0V101M127.5 0V101M142.5 0V101M157.5 0V101M0 11.5H169M0 21.5H169M0 31.5H169M0 41.5H169M0 51.5H169M0 61.5H169M0 71.5H169M0 81.5H169M0 91.5H169" stroke="#24d034" stroke-width="1" fill="none" clip-path="url(#c3)"/><polyline points="0.0,65.7 6.0,66.8 10.0,76.9 13.2,68.6 21.7,66.4 28.4,67.9 31.1,70.9 34.7,64.1 39.6,70.2 43.0,64.1 50.9,62.3 62.0,62.8 75.5,64.1 78.9,69.1 82.3,76.1 85.6,69.1 89.0,65.7 98.0,66.8 103.0,74.7 105.0,69.1 107.0,62.8 111.5,69.1 115.5,75.4 119.3,69.1 122.7,65.7 133.9,65.7 137.3,70.9 139.5,80.6 142.4,69.1 147.4,64.6 154.0,63.4 163.0,63.4 169.0,61.2" fill="none" stroke="#30e840" stroke-width="1.1"/><polyline points="0.0,68.3 6.0,69.4 10.0,81.0 13.2,71.2 21.7,69.0 28.4,70.5 31.1,73.5 34.7,66.7 39.6,72.8 43.0,66.7 50.9,64.9 62.0,65.4 75.5,66.7 78.9,71.7 82.3,80.2 85.6,71.7 89.0,68.3 98.0,69.4 103.0,78.8 105.0,71.7 107.0,65.4 111.5,71.7 115.5,79.5 119.3,71.7 122.7,68.3 133.9,68.3 137.3,75.0 139.5,84.7 142.4,71.7 147.4,67.2 154.0,66.0 163.0,66.0 169.0,63.8" fill="none" stroke="#3c6ee6" stroke-width="2.4" stroke-linejoin="round"/></svg></div>
<span class="t b tr" style="top:493.25px;font-size:10.8px;-webkit-text-stroke:0.2px;right:43.80px;transform:scaleX(1.0306);">0</span>
<span class="t b" style="top:508.75px;font-size:10.8px;-webkit-text-stroke:0.2px;left:590.60px;transform:scaleX(1.0976);">100 ошибок страниц (диск)...</span>
<div style="left:763px;top:517px;width:6px;height:1px;background:#000"></div>
<div style="left:768px;top:517px;width:1px;height:78px;background:#000"></div>
<div style="left:590px;top:525px;width:171px;height:70px;background:#000;border:1px solid;border-color:#4c4c4c #d8d8d8 #e8e8e8 #585858;overflow:hidden"><svg style="left:0;top:0" width="169" height="101" viewBox="0 0 169 101"><path d="M7.5 0V101M22.5 0V101M37.5 0V101M52.5 0V101M67.5 0V101M82.5 0V101M97.5 0V101M112.5 0V101M127.5 0V101M142.5 0V101M157.5 0V101M0 11.5H169M0 21.5H169M0 31.5H169M0 41.5H169M0 51.5H169M0 61.5H169M0 71.5H169M0 81.5H169M0 91.5H169" stroke="#0b7019" stroke-width="1" fill="none"/><rect x="0" y="42" width="169" height="2.2" fill="#3c5ce4"/></svg></div>
</div></body></html>
